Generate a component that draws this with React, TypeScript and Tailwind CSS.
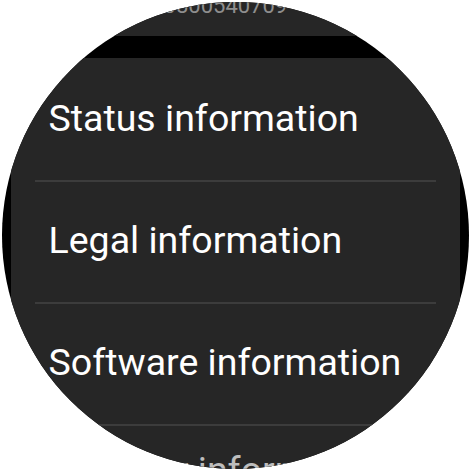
import React from "react";

const rows = ["Status information", "Legal information", "Software information"];

export default function App() {
  return (
    <div
      className="w-[470px] h-[470px] bg-white flex items-center justify-center"
      style={{ fontFamily: "Roboto, 'Liberation Sans', sans-serif" }}
    >
      {/* round watch face */}
      <div className="w-[467px] h-[467px] rounded-full bg-black overflow-hidden flex flex-col">
        {/* serial number card, scrolled mostly off the top */}
        <div className="mt-[-78px] mx-[9px] rounded-[28px] bg-[#262626] pt-[30px] pb-[19px] pl-[38px] flex flex-col gap-[4px] shrink-0">
          <p className="text-[37px] leading-none text-white">Serial number</p>
          <p className="text-[22px] leading-none text-[#8e8e8e] pl-[62px]">R5CT0800540709</p>
        </div>

        {/* about list */}
        <div className="mt-[22px] mx-[9px] rounded-[28px] bg-[#262626] pt-[2px] flex flex-col shrink-0">
          {rows.map((label) => (
            <React.Fragment key={label}>
              <div className="h-[120px] flex items-center pb-[2px] pl-[38px]">
                <span className="text-[37.5px] leading-none text-white whitespace-nowrap">{label}</span>
              </div>
              <div className="h-[2px] mx-[24px] bg-[#3c3c3c]" />
            </React.Fragment>
          ))}
          <div className="h-[120px] pt-[26px] pl-[59px]">
            <span className="text-[37.5px] leading-none text-[#bdbdbd] whitespace-nowrap">Battery information</span>
          </div>
        </div>
      </div>
    </div>
  );
}
